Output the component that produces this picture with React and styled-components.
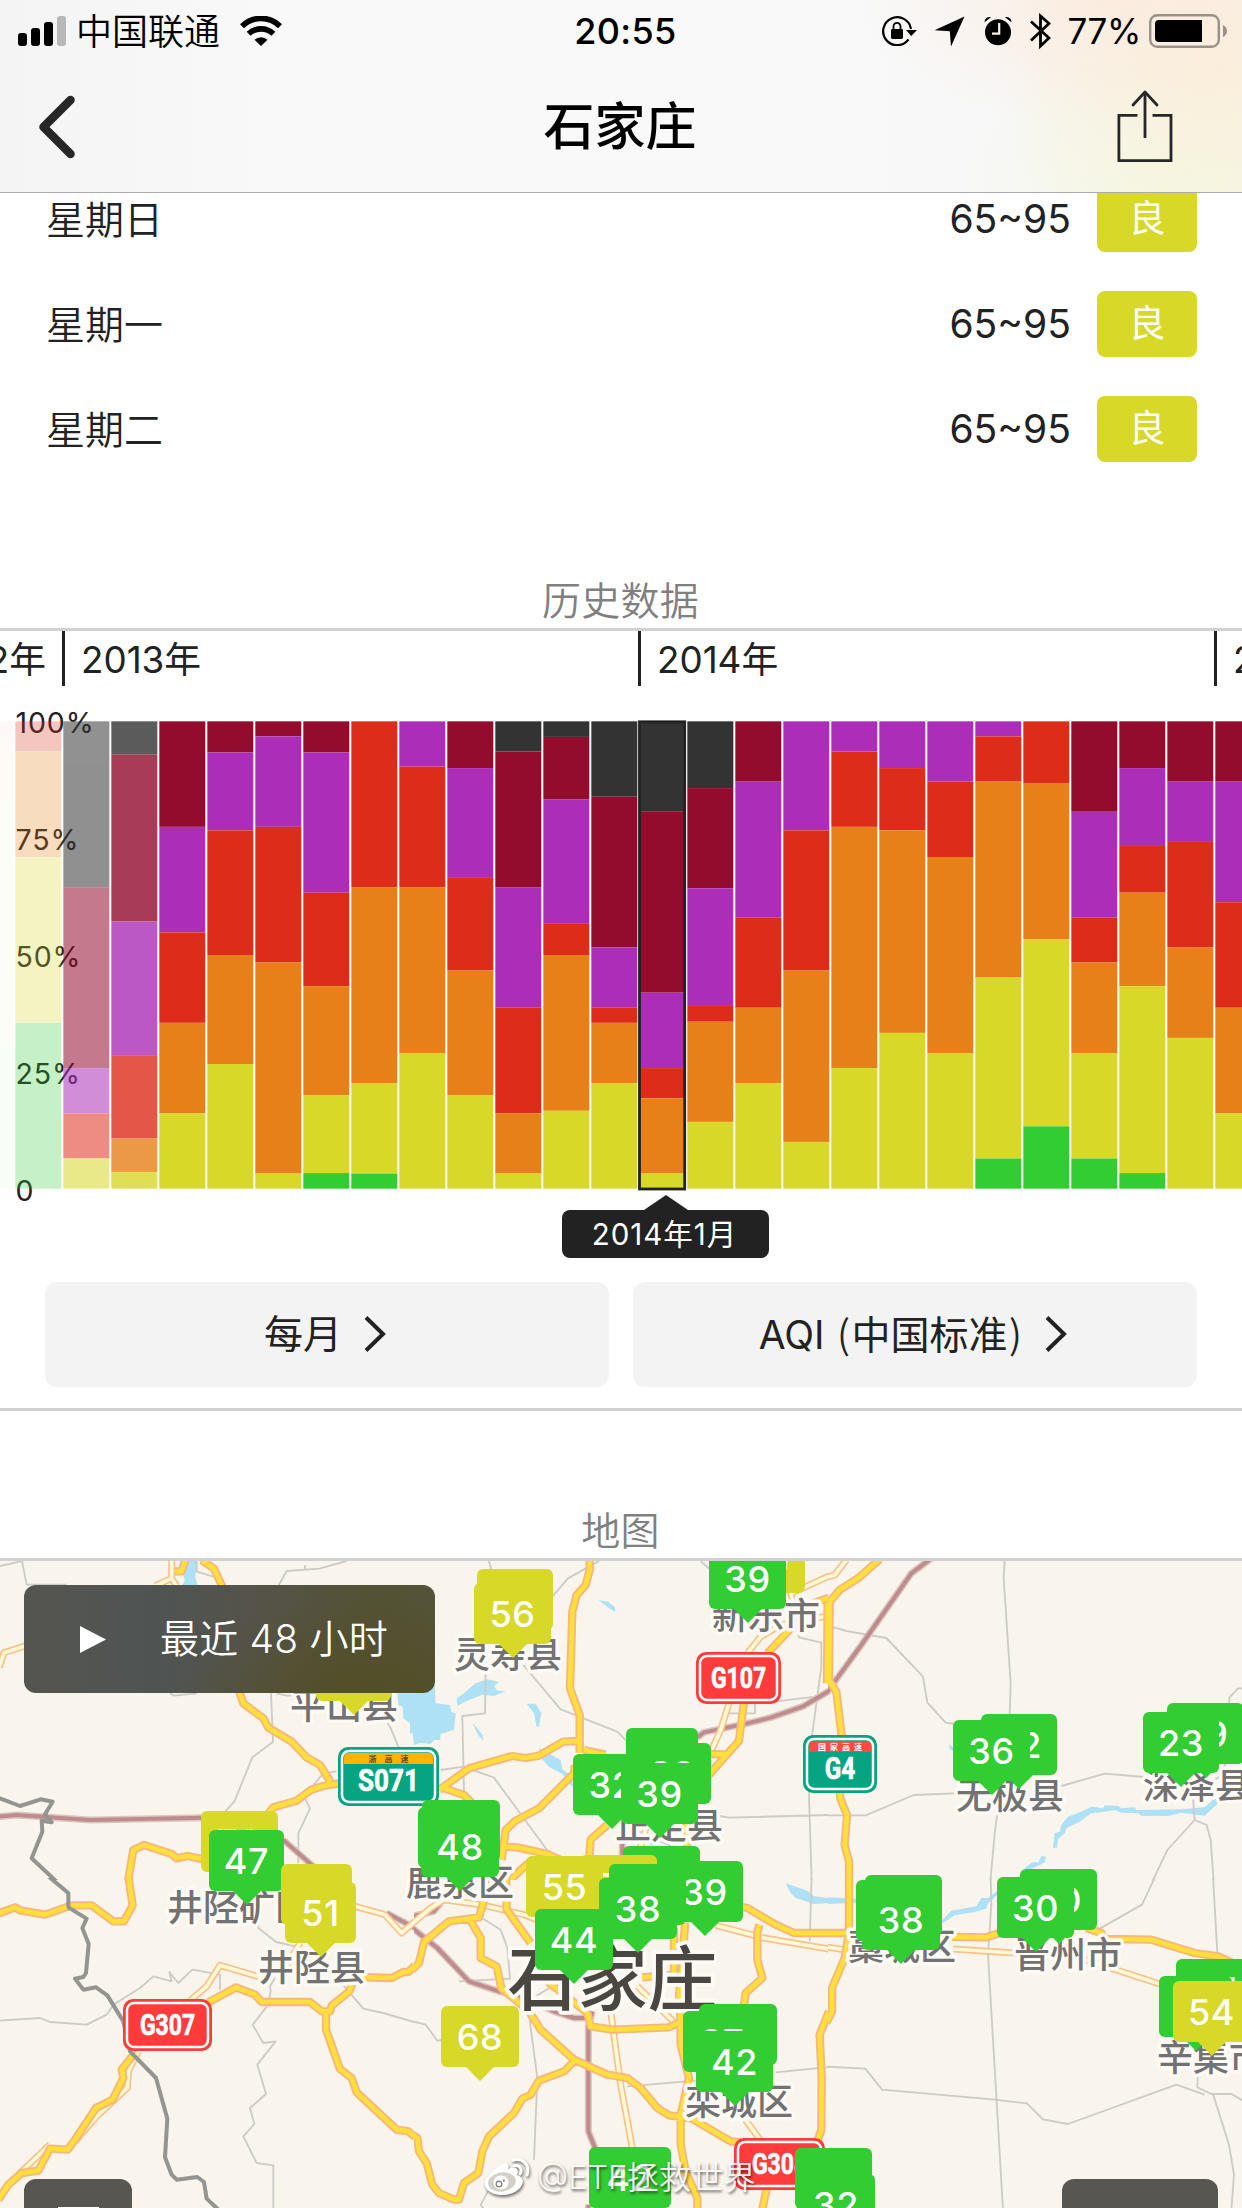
import React from "react";
import styled, { createGlobalStyle, css } from "styled-components";

const GlobalStyle = createGlobalStyle`
  * { box-sizing: border-box; }
  body {
    margin: 0;
    background: #fff;
    color: #222;
    font-family: Inter, "Noto Sans CJK SC", sans-serif;
  }
`;

const C = {
  ink: "#222222",
  line: "#d1d1d1",
  muted: "#808080",
  green: "#31cd32",
  yellow: "#d7d827",
};

/* ---------- layout ---------- */

const Screen = styled.div`
  width: 1242px;
  height: 2208px;
  overflow: hidden;
  display: flex;
  flex-direction: column;
  background: #fff;
`;

const Header = styled.header`
  position: relative;
  z-index: 2;
  flex: none;
  height: 193px;
  border-bottom: 1px solid #ababab;
  background:
    radial-gradient(ellipse 260px 130px at 1120px 0, rgba(252, 233, 218, 0.75), rgba(252, 233, 218, 0) 100%),
    radial-gradient(ellipse 230px 190px at 1220px 70px, rgba(250, 239, 217, 0.9), rgba(250, 239, 217, 0) 100%),
    radial-gradient(ellipse 230px 170px at 1190px 192px, rgba(244, 248, 222, 0.9), rgba(244, 248, 222, 0) 100%),
    linear-gradient(90deg, #f4f4f4, #f9f9f9 22%, #f9f9f9 66%, #f6f6f5);
`;

const StatusBar = styled.div`
  height: 62px;
  display: grid;
  grid-template-columns: 1fr auto 1fr;
  align-items: center;
  padding: 0 15px 0 18px;
  color: #000;
  font-size: 36px;
  line-height: 60px;
`;

const StatusGroup = styled.div`
  display: flex;
  align-items: center;
  height: 60px;
  justify-content: ${(p) => (p.$end ? "flex-end" : "flex-start")};
`;

const Carrier = styled.span`
  margin: 0 20px 0 10px;
  padding-top: 1px;
  font-size: 36px;
  font-weight: 350;
`;

const Clock = styled.span`
  font-size: 36px;
  font-weight: 550;
  letter-spacing: 0.3px;
  transform: translateX(3px);
`;

const Percent = styled.span`
  font-size: 35px;
  margin: 0 8px 0 17px;
  letter-spacing: -0.4px;
`;

const StatusSvg = styled.svg`
  flex: none;
  display: block;
  margin-left: ${(p) => p.$ml || 0}px;
`;

const NavBar = styled.div`
  height: 130px;
  display: grid;
  grid-template-columns: 1fr auto 1fr;
  align-items: center;
  padding: 0 69px 0 38px;
`;

const NavTitle = styled.h1`
  margin: 0 0 1px 29px;
  font-size: 51px;
  line-height: 74px;
  font-weight: 500;
  color: #000;
`;

const ShareSlot = styled.div`
  justify-self: end;
  height: 74px;
  margin-top: -2px;
`;

/* ---------- forecast ---------- */

const Forecast = styled.section`
  flex: none;
  margin-top: -27px;
  height: 390px;
`;

const DayRow = styled.div`
  height: 105px;
  padding: 1px 45px 0 46px;
  display: flex;
  align-items: center;
  font-size: 39px;
`;

const DayName = styled.span`
  flex: 1;
  padding-bottom: 5px;
  font-weight: 350;
`;

const Range = styled.span`
  font-size: 39px;
  padding-bottom: 2px;
  margin-right: 26px;
`;

const Level = styled.span`
  width: 100px;
  height: 66px;
  border-radius: 8px;
  background: ${C.yellow};
  color: #fff;
  font-size: 37px;
  line-height: 66px;
  text-align: center;
`;

/* ---------- section titles ---------- */

const SectionTitle = styled.h2`
  flex: none;
  margin: 0;
  height: ${(p) => p.$h}px;
  padding-right: 1px;
  display: flex;
  align-items: flex-end;
  justify-content: center;
  border-bottom: 3px solid ${C.line};
  color: ${C.muted};
  font-size: 39px;
  line-height: 54px;
  font-weight: 350;
  letter-spacing: 0.2px;
`;

/* ---------- history ---------- */

const History = styled.section`
  flex: none;
  height: 780px;
  border-bottom: 3px solid ${C.line};
  overflow: hidden;
`;

const Years = styled.div`
  display: flex;
  width: 2400px;
  height: 55px;
  margin-left: -514px;
`;

const Year = styled.div`
  width: 576px;
  border-left: 3px solid ${C.ink};
  padding: 0 16px;
  font-size: 36.8px;
  font-weight: 380;
  line-height: 57px;
  text-align: ${(p) => (p.$right ? "right" : "left")};
`;

const Plot = styled.svg`
  display: block;
  overflow: visible;
`;

const Tip = styled.div`
  width: 207px;
  margin-left: 562px;
  display: flex;
  flex-direction: column;
  align-items: center;
`;

const TipArrow = styled.div`
  border: 22px solid transparent;
  border-top-width: 0;
  border-bottom: 15px solid ${C.ink};
`;

const TipBody = styled.div`
  width: 100%;
  height: 48px;
  padding-right: 2px;
  border-radius: 8px;
  background: ${C.ink};
  color: #fff;
  font-size: 29.5px;
  font-weight: 380;
  line-height: 49px;
  text-align: center;
  letter-spacing: 1px;
`;

const Choices = styled.div`
  display: grid;
  grid-template-columns: 1fr 1fr;
  gap: 24px;
  padding: 24px 45px 0;
`;

const Choice = styled.button`
  height: 105px;
  border: 0;
  border-radius: 12px;
  background: #f3f3f3;
  color: ${C.ink};
  font: 400 39px/104px Inter, "Noto Sans CJK SC", sans-serif;
  display: flex;
  align-items: center;
  justify-content: center;
  gap: 22px;
  padding: 0 4px 2px 0;
`;

const Paren = styled.span`
  font-family: "Noto Sans CJK SC", sans-serif;
  font-weight: 350;
  margin: 0 1.5px;
`;

/* ---------- map ---------- */

const MapArea = styled.section`
  position: relative;
  flex: none;
  height: 647px;
  overflow: hidden;
  background: #f9f4ec;
`;

const MapSvg = styled.svg`
  display: block;
`;

const Pin = styled.div`
  position: absolute;
  left: ${(p) => p.$x}px;
  top: ${(p) => p.$y - 1561}px;
  width: ${(p) => p.$w}px;
  height: 61px;
  border-radius: 6px;
  background: ${(p) => p.$c};
  color: #fff;
  font-size: 36px;
  font-weight: 500;
  line-height: 62px;
  text-align: center;
  letter-spacing: 0.6px;
  &::after {
    content: "";
    position: absolute;
    top: 60px;
    left: 50%;
    margin-left: -15px;
    border: 15px solid transparent;
    border-bottom-width: 0;
    border-top-color: ${(p) => p.$c};
  }
`;

const overlay = css`
  position: absolute;
  border-radius: 12px;
`;

const PlayButton = styled.button`
  ${overlay}
  left: 24px;
  top: 24px;
  width: 411px;
  height: 108px;
  border: 0;
  padding: 0 0 0 56px;
  display: flex;
  align-items: center;
  gap: 54px;
  color: #fff;
  font: 350 39px/108px Inter, "Noto Sans CJK SC", sans-serif;
  letter-spacing: 0.2px;
  background:
    radial-gradient(ellipse 190px 110px at 345px 120px, #524e25, rgba(82, 78, 37, 0)),
    linear-gradient(90deg, #555550, #4f5453 32%, #55534a 55%, #545234 85%, #555239);
`;

const CornerButton = styled.div`
  ${overlay}
  left: ${(p) => p.$x}px;
  top: 618px;
  width: ${(p) => p.$w}px;
  height: 108px;
  background: #585650;
  display: flex;
  justify-content: center;
  padding-top: 28px;
`;

const MenuMark = styled.span`
  width: 41px;
  height: 4px;
  background: #fff;
`;

const Watermark = styled.div`
  position: absolute;
  left: 483px;
  top: 593px;
  height: 48px;
  display: flex;
  align-items: center;
  gap: 6px;
  color: rgba(255, 255, 255, 0.92);
  font-size: 32.2px;
  font-weight: 350;
  line-height: 48px;
  white-space: nowrap;
  text-shadow: 1px 2px 3px rgba(0, 0, 0, 0.6);
`;

/* ---------- data ---------- */

const DAYS = ["星期日", "星期一", "星期二"];

const LEVELS = ["#333333", "#930b2d", "#ac2eb8", "#de2c1b", "#e78019", "#d7d827", "#31cd32"];

// Days per month at each level, from hazardous to excellent.
const MONTHS = [
  [0, 0, 0, 1, 4, 16, 9],
  [0, 0, 0, 2, 7, 11, 11],
  [11, 12, 3, 3, 0, 2, 0],
  [2, 10, 8, 5, 2, 1, 0],
  [0, 7, 7, 6, 6, 5, 0],
  [0, 2, 5, 8, 7, 8, 0],
  [0, 1, 6, 9, 14, 1, 0],
  [0, 2, 9, 6, 7, 5, 1],
  [0, 0, 0, 11, 13, 6, 1],
  [0, 0, 3, 8, 11, 9, 0],
  [0, 3, 7, 6, 8, 6, 0],
  [2, 9, 8, 7, 4, 1, 0],
  [1, 4, 8, 2, 10, 5, 0],
  [5, 10, 4, 1, 4, 7, 0],
  [6, 12, 5, 2, 5, 1, 0],
  [4, 6, 7, 1, 6, 4, 0],
  [0, 4, 9, 6, 5, 7, 0],
  [0, 0, 7, 9, 11, 3, 0],
  [0, 0, 2, 5, 16, 8, 0],
  [0, 0, 3, 4, 13, 10, 0],
  [0, 0, 4, 5, 13, 9, 0],
  [0, 0, 1, 3, 13, 12, 2],
  [0, 0, 0, 4, 10, 12, 4],
  [0, 6, 7, 3, 6, 7, 2],
  [0, 3, 5, 3, 6, 12, 1],
  [0, 4, 4, 7, 6, 10, 0],
  [0, 4, 8, 7, 7, 5, 0],
];
const FADE = [0.03, 0.27, 0.54, 0.8];

const AXIS = [["100%", 722], ["75%", 839], ["50%", 956], ["25%", 1073], ["0", 1190]];

const G = C.green;
const Y = C.yellow;
// [x, y, width, colour, value]
const PINS = [
  [316, 1640, 75, Y, ""],
  [201, 1811, 77, Y, "70"],
  [209, 1830, 75, G, "47"],
  [281, 1864, 71, Y, ""],
  [285, 1882, 71, Y, "51"],
  [422, 1800, 78, G, ""],
  [418, 1807, 78, G, ""],
  [421, 1816, 78, G, "48"],
  [477, 1569, 76, Y, ""],
  [474, 1583, 77, Y, "56"],
  [728, 1532, 77, Y, "50"],
  [709, 1548, 77, G, "39"],
  [626, 1728, 72, G, ""],
  [573, 1754, 77, G, "32"],
  [634, 1743, 77, G, "39"],
  [621, 1763, 77, G, "39"],
  [623, 1846, 77, G, ""],
  [580, 1855, 77, Y, "70"],
  [526, 1856, 77, Y, "55"],
  [666, 1861, 77, G, "39"],
  [609, 1864, 77, G, ""],
  [599, 1878, 78, G, "38"],
  [535, 1909, 78, G, "44"],
  [441, 2006, 78, Y, "68"],
  [699, 2004, 78, G, ""],
  [683, 2011, 78, G, "37"],
  [696, 2031, 77, G, "42"],
  [589, 2147, 82, G, "42"],
  [795, 2148, 77, G, ""],
  [797, 2174, 78, G, "32"],
  [865, 1875, 77, G, ""],
  [856, 1880, 77, G, ""],
  [862, 1889, 78, G, "38"],
  [1020, 1869, 77, G, "30"],
  [997, 1877, 77, G, "30"],
  [981, 1714, 76, G, "32"],
  [953, 1720, 77, G, "36"],
  [1167, 1703, 77, G, "29"],
  [1143, 1712, 76, G, "23"],
  [1176, 1959, 77, G, "37"],
  [1159, 1976, 73, G, ""],
  [1173, 1981, 77, Y, "54"],
];

const CITIES = [
  [344, 1705, "平山县"],
  [508, 1654, "灵寿县"],
  [766, 1615, "新乐市"],
  [669, 1825, "正定县"],
  [1010, 1795, "无极县"],
  [1197, 1785, "深泽县"],
  [460, 1882, "鹿泉区"],
  [239, 1907, "井陉矿区"],
  [312, 1967, "井陉县"],
  [902, 1946, "藁城区"],
  [1068, 1954, "晋州市"],
  [1211, 2057, "辛集市"],
  [739, 2101, "栾城区"],
];

// Each tile covers 414x330 map pixels, drawn at three units a pixel.
const TILES = [
  {
    x: 0, y: 1550,
    water: ["M562,30 L588,30 588,70 585,78 593,108 545,108 554,92 548,70Z", "M1192,430 L1242,430 1242,585 1238,550 1230,550 1230,520 1210,505 1208,470 1195,465Z"],
    minor: ["M0,48 L66,33 80,104 200,104", "M590,33 L590,65 640,80", "M1040,33 L958,56 860,63 835,108", "M915,46 L915,60", "M510,430 L522,437 590,430", "M813,430 L819,575 757,622 703,755 670,790", "M830,430 L860,437 880,436", "M1150,500 L1170,530 1196,592", "M1010,664 L970,670 912,740 930,775 895,850 895,940"],
    rail: ["M-5,800 L50,795 270,810 610,803", "M850,870 L935,945 990,990"],
    light: ["M515,30 L515,85 465,108", "M515,85 L530,108", "M78,287 L12,308 -2,352"],
    major: ["M556,30 L545,64 525,64", "M605,30 L642,56 668,112", "M718,425 L730,460 790,505 805,533 875,575 920,622 960,645 988,690 985,703", "M1030,698 L970,708 932,720 890,752 820,772 805,790", "M384,995 L400,900 432,885 515,912 530,925 562,918 610,928"],
    border: ["M-5,743 L60,768 122,748 158,755 135,793 155,817 125,812 127,845 95,925 170,995"],
  },
  {
    x: 414, y: 1550,
    water: ["M-2,400 L62,400 65,460 108,465 112,485 125,490 120,540 80,552 78,570 60,570 50,582 20,578 -2,586Z", "M128,445 L150,430 185,400 220,388 255,396 240,408 250,422 275,423 240,438 205,434 165,450 130,467Z", "M338,461 L365,461 382,490 375,530 368,530 360,490Z", "M176,518 L206,555 208,572 192,555Z", "M552,150 L582,155 603,172 603,187Z", "M375,593 L395,605 440,630 445,658 475,680 475,712 445,672 405,650 385,628Z", "M635,820 L700,855 720,890 690,875 635,850Z"],
    minor: ["M225,33 L232,60", "M555,33 L462,85 415,140", "M860,33 L890,60", "M328,345 L440,478 610,545 640,575", "M215,360 L213,490 145,498 150,725", "M80,660 L148,650 240,683 410,915", "M940,490 L1023,490 1023,460", "M1080,455 L1205,440", "M1150,240 L1155,262 1222,278 1222,350 1195,550 1185,740 1193,995", "M900,795 L945,803 1245,795", "M730,870 L770,888"],
    rail: ["M850,562 L870,547 1000,520 1070,503 1165,470 1245,423", "M625,840 L625,915"],
    light: ["M1245,78 L1165,115 1130,130 1150,200", "M1230,200 L1100,225 1040,260 1000,310", "M945,460 L920,540 893,600", "M700,820 L680,890"],
    major: ["M527,30 L527,60 515,105 488,135 475,185 468,415 497,495 497,608", "M75,720 L165,655 295,618 335,624 375,617 448,575 490,573", "M510,600 L575,614", "M482,645 L480,670 375,775 305,812 275,840 263,930", "M268,890 L310,892 400,912 440,930", "M580,825 L530,868 526,920", "M82,712 L150,735 175,760", "M990,455 L975,572 880,680", "M885,612 L940,614", "M1060,310 L1140,225 1170,170 1245,143", "M1241,160 L1239,400", "M818,822 L820,892", "M355,930 L320,960 285,995"],
    border: [],
  },
  {
    x: 828, y: 1550,
    water: ["M675,893 L680,850 695,845 700,825 720,800 760,785 790,770 825,775 830,766 870,768 880,775 920,772 925,780 1060,778 1130,772 1160,745 1200,730 1165,765 1130,797 1060,788 1020,798 940,797 930,790 880,788 860,780 830,785 790,790 755,815 715,835 710,850 690,868 687,893Z", "M590,955 L612,937 632,937 640,918 654,920 650,937 635,945 610,957 600,965Z", "M363,583 L375,592 375,602 365,598Z"],
    minor: ["M10,230 L55,243 175,264 285,380 298,458 353,518 380,522", "M530,33 L527,85 548,400 545,495", "M-5,796 L113,796 257,735 380,730", "M700,708 L830,671 950,681", "M508,790 L500,850 487,995", "M1245,415 L1230,415 1204,443 1204,460", "M1095,740 L1100,810 1018,900 973,995", "M1100,810 L1136,825 1148,870 1157,995", "M1190,640 L1190,670 1160,690"],
    rail: ["M-5,430 L20,395 100,285 250,70 310,25"],
    light: ["M55,30 L20,75 -5,82"],
    major: ["M155,28 L90,85 35,120 5,155 3,390 25,425 42,565", "M35,720 L37,745 57,795 50,885 63,935 63,995"],
    border: [],
  },
  {
    x: 0, y: 1878,
    water: [],
    minor: ["M-5,428 L120,420 150,432 260,440 320,410 340,380 420,330 460,295 515,310 508,282 535,315 577,275 660,290 660,335", "M775,140 L775,150 828,192 885,205", "M825,300 L810,325 812,340 805,380 758,440 790,495 827,490 772,560 798,648 750,690 763,738 730,775 770,855 820,862 820,995", "M1020,310 L1090,392 1150,405 1245,433"],
    rail: ["M1160,105 L1245,150"],
    light: ["M570,368 L620,325 660,262 780,297 855,270 900,195", "M1065,85 L1155,110 1205,165 1245,130", "M415,520 L385,580 382,630 290,715 225,790", "M150,800 L60,885"],
    major: ["M-5,107 L45,88 60,97 135,110 215,82 275,82 340,130 372,130 398,82 385,-5", "M625,373 L708,328 765,350 785,372 930,372 965,400 990,400 995,383 1048,340 1065,297 1175,300 1210,282 1225,282 1245,262", "M978,400 L978,455 1020,573 1055,600 1070,643 1190,755 1225,760 1245,777", "M402,528 L365,575 370,600 338,665 288,690 225,785 203,815 150,812 115,878 65,885 25,920 -5,965"],
    border: ["M145,-5 L205,45 205,88 260,122 247,150 266,198 258,285 250,297 225,302 250,335 288,328 322,352 370,430 390,520 468,600 502,722 495,838 515,890 530,905 592,897 612,912 620,962 655,995"],
  },
  {
    x: 414, y: 1878,
    water: ["M1115,16 L1180,38 1200,55 1245,60 1245,75 1200,78 1145,60 1130,45Z"],
    minor: ["M200,118 L260,155 280,210 288,302 135,310", "M-5,430 L35,440 70,488 85,486", "M345,410 L370,600 360,845", "M640,625 L845,608", "M1085,583 L1245,567", "M1193,-5 L1187,190", "M222,940 L200,980 210,995", "M365,355 L415,325"],
    rail: ["M-5,150 L70,210 165,310 255,340 330,360 420,400 480,420 530,420 535,400", "M523,440 L523,760 545,815", "M-5,115 L60,100 80,75", "M523,980 L523,995"],
    light: ["M-5,137 L50,90 90,65 200,80 330,110 380,130", "M590,400 L620,620 655,810", "M670,325 L780,432", "M905,142 L1050,180 1245,213", "M985,712 L1045,795"],
    major: ["M-5,275 L15,255 30,192 105,130 195,118 212,60 215,-5", "M165,120 L200,180 200,240 248,265 262,330 345,400 380,455 480,545 580,590 640,600 680,630 730,690 765,712 830,720 950,790 1000,795", "M276,-5 L278,95 350,195", "M480,550 L450,580 375,608 350,650 325,662 300,705 225,775 205,820 193,885 150,915 135,965 120,965 75,945 55,920 38,855 15,820 10,780 -5,770", "M400,310 L520,405 530,445 595,455 765,448 800,432", "M813,135 L805,270 795,350 800,430 800,500 825,600 800,710 800,800 815,880 850,960 850,995", "M685,298 L780,290 780,150", "M950,80 L1000,90 1085,140 1140,165 1245,165", "M1037,140 L1030,160 1030,245 1045,300 995,345 990,380", "M1245,400 L1217,470 1223,600 1222,755 1210,790", "M1058,930 L1045,995"],
    border: [],
  },
  {
    x: 828, y: 1878,
    water: ["M-2,58 L85,62 85,74 -2,78Z", "M340,130 L370,98 445,85 460,60 480,60 508,38 508,50 480,75 475,92 440,102 380,112 345,135Z"],
    minor: ["M488,-5 L490,80 480,230 525,995", "M-5,566 L112,572 162,635 500,665 597,676 645,724 720,738 1045,620 1130,650", "M982,-5 L942,80 810,155", "M1155,-5 L1168,225", "M1110,580 L1108,628 1150,648 1210,648 1245,668", "M1155,648 L1203,800 1218,890 1210,995"],
    rail: [],
    light: ["M-5,207 L50,215", "M375,213 L560,225 660,235", "M740,235 L995,318"],
    major: ["M63,-5 L63,165 50,240 12,330 12,400 -5,435", "M-5,165 L63,165", "M340,176 L475,178 515,165", "M775,150 L820,165 830,183 970,185 1100,225 1170,235 1215,255"],
    border: [],
  },
];

/* ---------- pieces ---------- */

const LINE_STYLES = {
  minor: [["#cdcbc5", 5.5]],
  rail: [["#dcc5c1", 21], ["#be8c8d", 12]],
  light: [["#f9c18c", 21], ["#fff9d6", 11]],
  major: [["#f9b67c", 25], ["#ffdf3b", 14]],
  border: [["#949490", 12]],
};

function Tile({ tile }) {
  return (
    <svg x={tile.x} y={tile.y} width="414" height="330" viewBox="0 0 1242 990">
      {tile.water.map((d) => <path key={d} d={d} fill="#aee1f6" />)}
      {Object.entries(LINE_STYLES).map(([kind, strokes]) =>
        strokes.map(([color, width]) => (
          <path key={kind + width} d={tile[kind].join(" ")} fill="none" stroke={color} strokeWidth={width} strokeLinejoin="round" />
        ))
      )}
    </svg>
  );
}

function Shield({ x, y, w, h, text, band, bandColor }) {
  const color = band ? "#05a583" : "#ff3b3c";
  return (
    <g>
      <rect x={x} y={y} width={w} height={h} rx="10" fill={color} />
      <rect x={x + 4} y={y + 4} width={w - 8} height={h - 8} rx="7" fill={color} stroke="#fff" strokeWidth="2.5" />
      {band && <path d={`M${x + 6},${y + 17} v-6 q0,-5 5,-5 h${w - 22} q5,0 5,5 v6z`} fill={bandColor} />}
      {band && (
        <text x={x + w / 2 + (w > 90 ? 4 : 2)} y={y + 15} fontSize="8" textAnchor="middle" letterSpacing={w > 90 ? 8 : 4} fontWeight="700" fill={bandColor === "#ffb300" ? "#5b4a10" : "#fff"}>
          {band}
        </text>
      )}
      <text x={x + w / 2} y={band ? y + 43.5 : y + h / 2 + 10.3} fontSize={band ? 31 : 29} fontFamily="Roboto, sans-serif" fontWeight="700" textAnchor="middle" fill="#fff" stroke="#fff" strokeWidth="0.7" textLength={text.length * (band ? 15.2 : 13.8)} lengthAdjust="spacingAndGlyphs">
        {text}
      </text>
    </g>
  );
}

function BaseMap() {
  return (
    <MapSvg width="1242" height="647" viewBox="0 1561 1242 647">
      {TILES.map((t) => <Tile key={`${t.x}-${t.y}`} tile={t} />)}
      <g textAnchor="middle" stroke="#fdfaf5" strokeLinejoin="round" paintOrder="stroke">
        {CITIES.map(([x, y, name]) => (
          <text key={name} x={x} y={y + 13.5} fontSize="36" fontWeight="500" fill="#727272" strokeWidth="7">{name}</text>
        ))}
        <text x="612.5" y="2005" fontSize="70" fontWeight="500" fill="#4a4640" strokeWidth="8">石家庄</text>
      </g>
      <Shield x={338} y={1747} w={101} h={59} text="S071" band="浙高速" bandColor="#ffb300" />
      <Shield x={696} y={1652} w={85} h={52} text="G107" />
      <Shield x={803} y={1735} w={74} h={58} text="G4" band="国家高速" bandColor="#ff4a43" />
      <Shield x={123} y={1999} w={89} h={52} text="G307" />
      <Shield x={734} y={2138} w={91} h={52} text="G308" />
    </MapSvg>
  );
}

function HistoryPlot() {
  const top = 721.33;
  const height = 467.33;
  return (
    <Plot width="1242" height="509" viewBox="0 686 1242 509">
      {AXIS.map(([label, y]) => (
        <text key={label} x="15.5" y={y + 10.5} fontSize="28.5" letterSpacing="0.9" fill={C.ink}>{label}</text>
      ))}
      {MONTHS.map((days, i) => {
        const total = days.reduce((a, b) => a + b, 0);
        let y = top;
        return (
          <g key={i} opacity={FADE[i] ?? 1}>
            {days.map((n, level) => {
              const h = (n / total) * height;
              const rect = n > 0 && <rect key={level} x={15.33 + (i - 1) * 48} y={y} width="46" height={h} fill={LEVELS[level]} />;
              y += h;
              return rect;
            })}
          </g>
        );
      })}
      <rect x="639.5" y="721.8" width="45.2" height="467.2" fill="none" stroke={C.ink} strokeWidth="2.8" />
    </Plot>
  );
}

const Chevron = () => (
  <svg width="22" height="36" viewBox="0 0 22 36" fill="none" stroke={C.ink} strokeWidth="4">
    <path d="M2,1.5 L19,18 L2,34.5" />
  </svg>
);

function Status() {
  return (
    <StatusBar>
      <StatusGroup>
        <StatusSvg width="48" height="30" viewBox="0 0 48 30">
          <rect y="17" width="9" height="13" rx="3" />
          <rect x="13" y="12" width="9" height="18" rx="3" />
          <rect x="26" y="6" width="9" height="24" rx="3" />
          <rect x="39" width="9" height="30" rx="3" fill="#b8b8b8" />
        </StatusSvg>
        <Carrier>中国联通</Carrier>
        <StatusSvg width="42" height="30" viewBox="0 0 42 30">
          <g fill="none" stroke="#000" strokeWidth="5.6">
            <path d="M2,10.2 A27,27 0 0 1 40,10.2" />
            <path d="M8.6,17.8 A18,18 0 0 1 33.4,17.8" />
          </g>
          <path d="M14.5,23.8 A9.5,9.5 0 0 1 27.5,23.8 L21,30 Z" />
        </StatusSvg>
      </StatusGroup>
      <Clock>20:55</Clock>
      <StatusGroup $end>
        <StatusSvg width="35" height="30" viewBox="0 0 35 30">
          <path d="M26.5,23.4 A14,14 0 1 1 29,13" fill="none" stroke="#000" strokeWidth="2.2" />
          <path d="M24,14 L35,14 29.2,20 Z" />
          <rect x="9" y="13" width="12" height="10" rx="1.4" />
          <path d="M11.5,14 V10.5 A3.5,3.7 0 0 1 18.5,10.5 V14" fill="none" stroke="#000" strokeWidth="1.8" />
        </StatusSvg>
        <StatusSvg $ml={17} width="31" height="31" viewBox="0 0 31 31">
          <path d="M30.5,0.5 L17,30.5 15.8,15.2 0.5,14.2 Z" />
        </StatusSvg>
        <StatusSvg $ml={19} width="28" height="30" viewBox="0 0 28 30">
          <circle cx="14" cy="16.3" r="13" />
          <path d="M0.5,6.2 A5,5 0 0 1 7,1.2 Z M27.5,6.2 A5,5 0 0 0 21,1.2 Z" />
          <path d="M15.2,7 V17.6 H8" fill="none" stroke="#f9f0e6" strokeWidth="2.2" />
        </StatusSvg>
        <StatusSvg $ml={18} width="21" height="36" viewBox="0 0 21 36">
          <path d="M1,8.5 L19,25 10.5,33 V3 L19,10.5 1,27.5" fill="none" stroke="#000" strokeWidth="2.8" />
        </StatusSvg>
        <Percent>77%</Percent>
        <StatusSvg width="78" height="34" viewBox="0 0 78 34">
          <rect x="1.2" y="1.2" width="68.6" height="31.6" rx="7" fill="none" stroke="#98928a" strokeWidth="2.4" />
          <path d="M53,6 V28 H10 Q6,28 6,24 V10 Q6,6 10,6 Z" />
          <path d="M74,11 Q78,13 78,17 T74,23 Z" fill="#98928a" />
        </StatusSvg>
      </StatusGroup>
    </StatusBar>
  );
}

const WeiboShape = styled.svg`
  flex: none;
  filter: drop-shadow(1px 2px 1.5px rgba(0, 0, 0, 0.55));
`;

const WeiboMark = () => (
  <WeiboShape width="48" height="42" viewBox="0 0 48 42">
    <path d="M18,8 C22,4 27,6 25,12 C32,9 37,12 34,18 C40,20 42,25 37,31 C31,38 18,40 9,36 C1,32 0,25 5,19 C9,14 13,11 18,8 Z" fill="#fff" />
    <ellipse cx="19" cy="25" rx="14" ry="9.5" transform="rotate(-8 19 25)" fill="#d4d0c9" />
    <ellipse cx="18" cy="25.5" rx="7.5" ry="7" fill="#fff" />
    <circle cx="16" cy="27" r="2.8" fill="none" stroke="#8b8984" strokeWidth="1.4" />
    <circle cx="20.8" cy="23.6" r="1.2" fill="#8b8984" />
    <path d="M31,9 C36,7 40,12 37,17 M30,3 C40,0 47,8 44,18" fill="none" stroke="#fff" strokeWidth="3" strokeLinecap="round" />
  </WeiboShape>
);

export default function App() {
  return (
    <Screen>
      <GlobalStyle />
      <Header>
        <Status />
        <NavBar>
          <svg width="38" height="64" viewBox="0 0 38 64" fill="none" stroke="#272727" strokeWidth="8.5" strokeLinecap="round" strokeLinejoin="round">
            <path d="M32.5,5 L5.5,32 L32.5,59" />
          </svg>
          <NavTitle>石家庄</NavTitle>
          <ShareSlot>
            <svg width="56" height="74" viewBox="0 0 56 74" fill="none" stroke="#272727" strokeWidth="2.8">
              <path d="M20.5,26.3 H1.9 V71.6 H54 V26.3 H35.5" />
              <path d="M28,49 V3" />
              <path d="M16,16 L28,3 L40,16" strokeLinecap="round" strokeLinejoin="round" />
            </svg>
          </ShareSlot>
        </NavBar>
      </Header>

      <Forecast>
        {DAYS.map((d) => (
          <DayRow key={d}>
            <DayName>{d}</DayName>
            <Range>65~95</Range>
            <Level>良</Level>
          </DayRow>
        ))}
      </Forecast>

      <SectionTitle $h={75}>历史数据</SectionTitle>
      <History>
        <Years>
          <Year $right>2012年</Year>
          <Year>2013年</Year>
          <Year>2014年</Year>
          <Year>2015年</Year>
        </Years>
        <HistoryPlot />
        <Tip>
          <TipArrow />
          <TipBody>2014年1月</TipBody>
        </Tip>
        <Choices>
          <Choice>每月<Chevron /></Choice>
          <Choice><span>AQI <Paren>(</Paren>中国标准<Paren>)</Paren></span><Chevron /></Choice>
        </Choices>
      </History>

      <SectionTitle $h={150}>地图</SectionTitle>
      <MapArea>
        <BaseMap />
        {PINS.map(([x, y, w, c, value], i) => (
          <Pin key={i} $x={x} $y={y} $w={w} $c={c}>{value}</Pin>
        ))}
        <PlayButton>
          <svg width="26" height="27" viewBox="0 0 26 27"><path d="M0,0 L26,13.5 0,27Z" fill="#fff" /></svg>
          最近 48 小时
        </PlayButton>
        <CornerButton $x={24} $w={108}><MenuMark /></CornerButton>
        <CornerButton $x={1062} $w={156} />
        <Watermark><WeiboMark />@ETF拯救世界</Watermark>
      </MapArea>
    </Screen>
  );
}
